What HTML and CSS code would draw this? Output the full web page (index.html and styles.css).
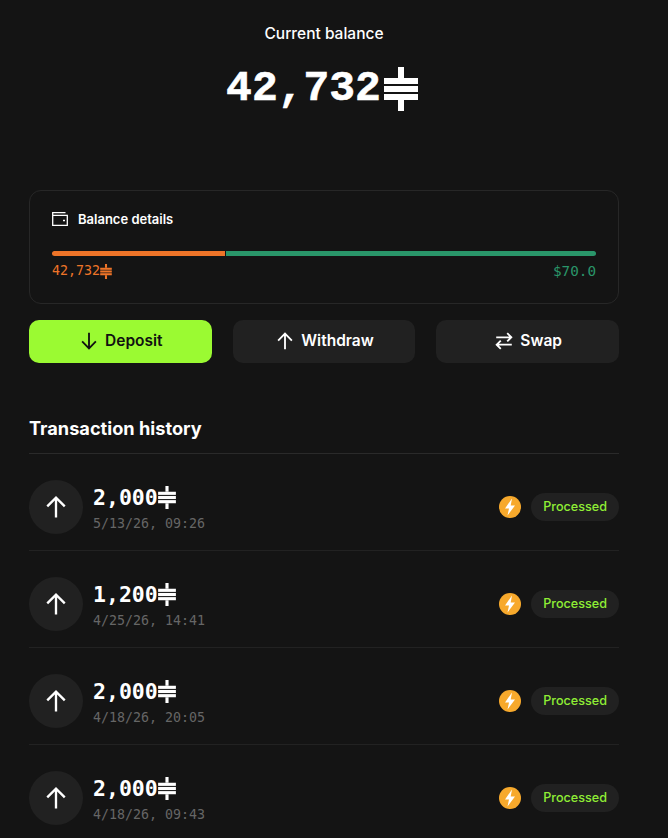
FILE: index.html
```html
<!DOCTYPE html>
<html lang="en">
<head>
<meta charset="utf-8">
<title>Wallet</title>
<link rel="stylesheet" href="styles.css">
</head>
<body>
<svg class="defs" width="0" height="0" aria-hidden="true">
  <symbol id="sat" viewBox="0 0 34 44">
    <rect x="0" y="11" width="34" height="6"/>
    <rect x="0" y="19" width="34" height="6"/>
    <rect x="0" y="27" width="34" height="6"/>
    <rect x="14" y="0" width="6" height="11"/>
    <rect x="14" y="33" width="6" height="11"/>
  </symbol>
  <symbol id="up" viewBox="0 0 24 24">
    <path d="M12 21V4M4.500 11.500 12 4l7.500 7.500" fill="none" stroke="currentColor" stroke-width="2"/>
  </symbol>
</svg>
<main class="page">
  <header class="hero">
    <div class="hero-label">Current balance</div>
    <div class="hero-value">42,732<svg class="sat-hero"><use href="#sat"/></svg></div>
  </header>

  <section class="card">
    <div class="card-head">
      <svg class="wallet" viewBox="0 0 16 14" fill="none" stroke="currentColor" stroke-width="1.300">
        <path d="M.7 3.300V.7h12.800M.7 3.300h14.600v10H.7z"/>
        <path d="M11 8.500h2" stroke-width="1.500"/>
      </svg>
      <span>Balance details</span>
    </div>
    <div class="bar">
      <div class="bar-a"></div>
      <div class="bar-b"></div>
    </div>
    <div class="bar-labels">
      <span class="lbl-a">42,732<svg class="sat-small"><use href="#sat"/></svg></span>
      <span class="lbl-b">$70.0</span>
    </div>
  </section>

  <div class="actions">
    <button class="btn btn-primary"><svg class="btn-icon" viewBox="0 0 24 24" fill="none" stroke="currentColor" stroke-width="2"><path d="M12 3v17M4.500 12.500 12 20l7.500-7.500"/></svg>Deposit</button>
    <button class="btn"><svg class="btn-icon"><use href="#up"/></svg>Withdraw</button>
    <button class="btn"><svg class="btn-icon" viewBox="0 0 24 24" fill="none" stroke="currentColor" stroke-width="2"><path d="M3.500 8h16M15.500 3.500 20 8l-4.500 4.500M20.500 16h-16M8.500 11.500 4 16l4.500 4.500"/></svg>Swap</button>
  </div>

  <h2 class="history-title">Transaction history</h2>

  <ul class="tx-list">
    <li class="tx">
      <div class="tx-icon"><svg class="tx-arrow"><use href="#up"/></svg></div>
      <div class="tx-main">
        <div class="tx-amount">2,000<svg class="sat-row"><use href="#sat"/></svg></div>
        <div class="tx-date">5/13/26, 09:26</div>
      </div>
      <svg class="bolt" viewBox="0 0 22 22"><circle cx="11" cy="11" r="11" fill="#f7a92c"/><path d="M13 2.500 6 12.500h4L8.500 19.500 16 9.500h-4.300z" fill="#fff"/></svg>
      <span class="pill">Processed</span>
    </li>
    <li class="tx">
      <div class="tx-icon"><svg class="tx-arrow"><use href="#up"/></svg></div>
      <div class="tx-main">
        <div class="tx-amount">1,200<svg class="sat-row"><use href="#sat"/></svg></div>
        <div class="tx-date">4/25/26, 14:41</div>
      </div>
      <svg class="bolt" viewBox="0 0 22 22"><circle cx="11" cy="11" r="11" fill="#f7a92c"/><path d="M13 2.500 6 12.500h4L8.500 19.500 16 9.500h-4.300z" fill="#fff"/></svg>
      <span class="pill">Processed</span>
    </li>
    <li class="tx">
      <div class="tx-icon"><svg class="tx-arrow"><use href="#up"/></svg></div>
      <div class="tx-main">
        <div class="tx-amount">2,000<svg class="sat-row"><use href="#sat"/></svg></div>
        <div class="tx-date">4/18/26, 20:05</div>
      </div>
      <svg class="bolt" viewBox="0 0 22 22"><circle cx="11" cy="11" r="11" fill="#f7a92c"/><path d="M13 2.500 6 12.500h4L8.500 19.500 16 9.500h-4.300z" fill="#fff"/></svg>
      <span class="pill">Processed</span>
    </li>
    <li class="tx">
      <div class="tx-icon"><svg class="tx-arrow"><use href="#up"/></svg></div>
      <div class="tx-main">
        <div class="tx-amount">2,000<svg class="sat-row"><use href="#sat"/></svg></div>
        <div class="tx-date">4/18/26, 09:43</div>
      </div>
      <svg class="bolt" viewBox="0 0 22 22"><circle cx="11" cy="11" r="11" fill="#f7a92c"/><path d="M13 2.500 6 12.500h4L8.500 19.500 16 9.500h-4.300z" fill="#fff"/></svg>
      <span class="pill">Processed</span>
    </li>
  </ul>
</main>
</body>
</html>
```
FILE: styles.css
```css
* { box-sizing: border-box; }
html, body { margin: 0; height: 100%; overflow: hidden; background: #141414; }
body { font-family: Inter, "Liberation Sans", sans-serif; color: #fff; }
.defs { position: absolute; }
.page { width: 590px; margin-left: 29px; }

.hero { height: 190px; padding-top: 25px; text-align: center; }
.hero-label { font-size: 15.500px; line-height: 18px; font-weight: 500; }
.hero-value {
  margin-top: 17px;
  display: flex; justify-content: center; align-items: center;
  font-family: "Liberation Mono", monospace;
  font-size: 43px; line-height: 58px; font-weight: 700;
  -webkit-text-stroke: 0.6px #fff;
  padding-right: 4px;
}
.sat-hero { width: 34px; height: 44px; fill: #fff; margin-left: 3px; }

.card {
  height: 114px;
  border: 1px solid #272727; border-radius: 12px;
  padding: 19px 22px 0;
}
.card-head { display: flex; align-items: center; gap: 10px; font-size: 13px; line-height: 18px; font-weight: 600; }
.wallet { width: 16px; height: 14px; color: #fff; }
.bar { display: flex; gap: 1px; height: 5px; margin-top: 23px; }
.bar-a { width: 173px; background: #ee7428; border-radius: 3px 0 0 3px; }
.bar-b { flex: 1; background: #2a966a; border-radius: 0 3px 3px 0; }
.bar-labels {
  display: flex; justify-content: space-between; align-items: center;
  margin-top: 5px;
  font-family: "DejaVu Sans Mono", monospace; font-size: 13.300px; line-height: 20px;
}
.lbl-a { color: #ee7428; display: flex; align-items: center; }
.lbl-b { color: #2a966a; font-size: 14.300px; }
.sat-small { width: 12px; height: 15px; fill: #ee7428; }

.actions { display: flex; gap: 21px; margin-top: 16px; }
.btn {
  flex: 1; height: 43px;
  display: flex; align-items: center; justify-content: center; gap: 5px;
  border: 0; border-radius: 10px; padding: 0 0 2px;
  background: #212121; color: #fff;
  font-family: inherit; font-size: 15.500px; font-weight: 600;
}
.btn-primary { background: #9bfa32; color: #111; }
.btn-icon { width: 22px; height: 22px; }

.history-title {
  margin: 54px 0 0; padding-bottom: 14px;
  font-size: 18.200px; line-height: 22px; font-weight: 700;
  border-bottom: 1px solid #2a2a2a;
}
.tx-list { list-style: none; margin: 0; padding: 0; }
.tx {
  height: 97px;
  display: flex; align-items: center; gap: 10px;
  padding-top: 9px;
  border-bottom: 1px solid #222;
}
.tx-icon {
  width: 54px; height: 54px; border-radius: 50%;
  background: #212121;
  display: flex; align-items: center; justify-content: center;
}
.tx-arrow { width: 28px; height: 28px; color: #fff; }
.tx-main { flex: 1; padding-top: 3px; }
.tx-amount {
  display: flex; align-items: center;
  font-family: "DejaVu Sans Mono", monospace;
  font-size: 21.500px; line-height: 26px; font-weight: 700;
}
.sat-row { width: 18px; height: 23px; fill: #fff; }
.tx-date {
  margin-top: 5px;
  font-family: "DejaVu Sans Mono", monospace;
  font-size: 13.300px; line-height: 16px; color: #666;
}
.bolt { width: 22px; height: 22px; }
.pill {
  height: 28px; padding: 0 12px; border-radius: 14px;
  background: #212121; color: #90ee35;
  font-size: 12.600px; line-height: 28px; font-weight: 500;
}
```
